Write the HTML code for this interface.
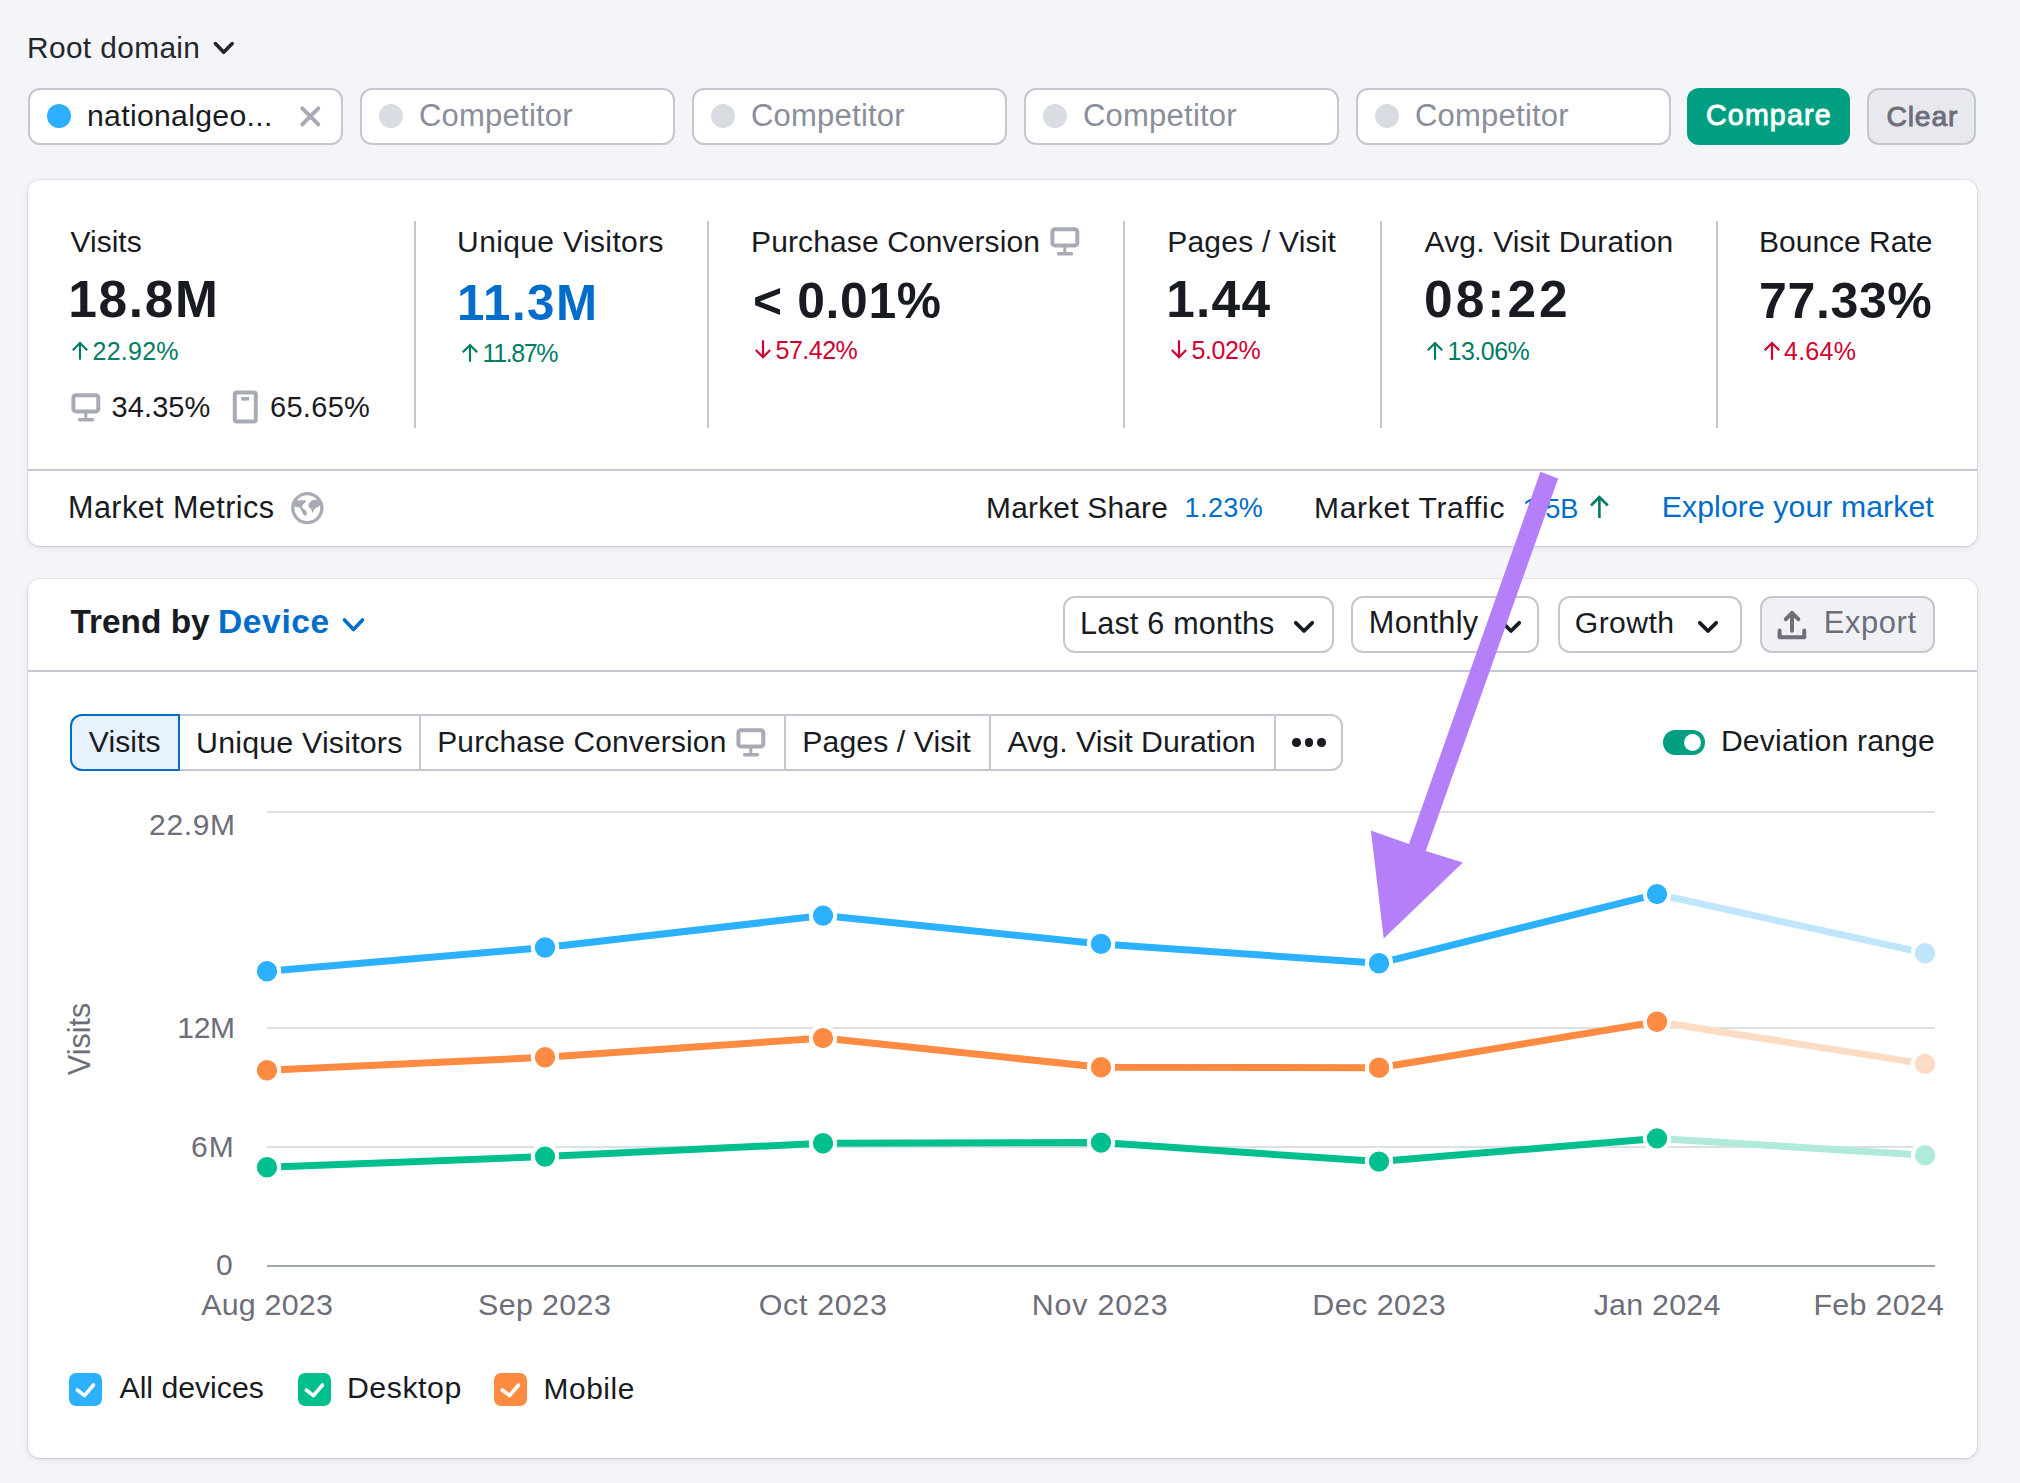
<!DOCTYPE html>
<html><head><meta charset="utf-8"><style>
html,body{margin:0;padding:0;}
body{width:2020px;height:1483px;overflow:hidden;background:#f4f5f9;position:relative;font-family:"Liberation Sans",sans-serif;}
.a{position:absolute;}
.t{position:absolute;line-height:1;white-space:nowrap;}
.box{box-sizing:border-box;border:2px solid #c4c7cf;border-radius:12px;background:#fff;}
.card{background:#fff;border-radius:12px;box-shadow:0 0 0 1px rgba(25,27,35,0.05),0 1px 2px rgba(25,27,35,0.10),0 2px 8px rgba(25,27,35,0.07);}
</style></head><body>
<div class="t" style="left:27.00px;top:33.17px;font-size:29.8px;color:#24262e;font-weight:400;letter-spacing:0.400px;">Root domain</div>
<svg class="a" style="left:205px;top:30px" width="40" height="36"><path d="M10.4 13.6 L18.7 22.3 L27.2 13.6" fill="none" stroke="#24262e" stroke-width="3.6" stroke-linecap="round" stroke-linejoin="round"/></svg>
<div class="a box" style="left:28px;top:88px;width:315px;height:57px"></div>
<div class="a" style="left:47px;top:104px;width:24px;height:24px;border-radius:50%;background:#2dafff"></div>
<div class="t" style="left:87.00px;top:100.63px;font-size:30.2px;color:#191b23;font-weight:400;letter-spacing:0.308px;">nationalgeo...</div>
<svg class="a" style="left:290px;top:96px" width="40" height="40"><path d="M12.3 12.3 L28.3 28.3 M28.3 12.3 L12.3 28.3" stroke="#a8abb6" stroke-width="4" stroke-linecap="round"/></svg>
<div class="a box" style="left:360px;top:88px;width:315px;height:57px"></div>
<div class="a" style="left:378.6px;top:104px;width:24px;height:24px;border-radius:50%;background:#d9dce3"></div>
<div class="t" style="left:419.00px;top:99.75px;font-size:31px;color:#8a8e9b;font-weight:400;letter-spacing:0.222px;">Competitor</div>
<div class="a box" style="left:692px;top:88px;width:315px;height:57px"></div>
<div class="a" style="left:710.6px;top:104px;width:24px;height:24px;border-radius:50%;background:#d9dce3"></div>
<div class="t" style="left:751.00px;top:99.75px;font-size:31px;color:#8a8e9b;font-weight:400;letter-spacing:0.222px;">Competitor</div>
<div class="a box" style="left:1024px;top:88px;width:315px;height:57px"></div>
<div class="a" style="left:1042.6px;top:104px;width:24px;height:24px;border-radius:50%;background:#d9dce3"></div>
<div class="t" style="left:1083.00px;top:99.75px;font-size:31px;color:#8a8e9b;font-weight:400;letter-spacing:0.222px;">Competitor</div>
<div class="a box" style="left:1356px;top:88px;width:315px;height:57px"></div>
<div class="a" style="left:1374.6px;top:104px;width:24px;height:24px;border-radius:50%;background:#d9dce3"></div>
<div class="t" style="left:1415.00px;top:99.75px;font-size:31px;color:#8a8e9b;font-weight:400;letter-spacing:0.222px;">Competitor</div>
<div class="a" style="left:1687px;top:88px;width:163px;height:57px;border-radius:12px;background:#009f81"></div>
<div class="t" style="left:1706.00px;top:101.28px;font-size:28.6px;color:#ffffff;font-weight:400;-webkit-text-stroke:0.9px #ffffff;letter-spacing:1.167px;">Compare</div>
<div class="a" style="left:1867px;top:88px;width:109px;height:57px;border-radius:12px;background:#e8e9ee;box-sizing:border-box;border:2px solid #c4c7cf"></div>
<div class="t" style="left:1886.50px;top:101.54px;font-size:28.3px;color:#6c6e79;font-weight:400;-webkit-text-stroke:0.9px #6c6e79;letter-spacing:0.814px;">Clear</div>
<div class="a card" style="left:28px;top:180px;width:1949px;height:366px"></div>
<div class="a" style="left:28px;top:469px;width:1949px;height:2px;background:#c4c7cf"></div>
<div class="a" style="left:413.5px;top:221px;width:2px;height:207px;background:#c4c7cf"></div>
<div class="a" style="left:706.5px;top:221px;width:2px;height:207px;background:#c4c7cf"></div>
<div class="a" style="left:1123px;top:221px;width:2px;height:207px;background:#c4c7cf"></div>
<div class="a" style="left:1380px;top:221px;width:2px;height:207px;background:#c4c7cf"></div>
<div class="a" style="left:1716px;top:221px;width:2px;height:207px;background:#c4c7cf"></div>
<div class="t" style="left:70.50px;top:226.60px;font-size:30px;color:#191b23;font-weight:400;">Visits</div>
<div class="t" style="left:68.25px;top:274.39px;font-size:51.5px;color:#191b23;font-weight:700;letter-spacing:1.625px;">18.8M</div>
<svg class="a" style="left:72.20px;top:341.00px" width="17" height="20"><path d="M8 18.8 L8 1.5 M0.8 9.3 L8 2 L15.2 9.3" fill="none" stroke="#007c65" stroke-width="2.2" stroke-linecap="butt" stroke-linejoin="miter"/></svg>
<div class="t" style="left:92.50px;top:338.83px;font-size:25px;color:#007c65;font-weight:400;letter-spacing:0.250px;">22.92%</div>
<div class="t" style="left:457.10px;top:226.60px;font-size:30px;color:#191b23;font-weight:400;letter-spacing:0.371px;">Unique Visitors</div>
<div class="t" style="left:457.00px;top:277.96px;font-size:49.3px;color:#006dca;font-weight:700;letter-spacing:1.425px;">11.3M</div>
<svg class="a" style="left:462.20px;top:343.00px" width="17" height="20"><path d="M8 18.8 L8 1.5 M0.8 9.3 L8 2 L15.2 9.3" fill="none" stroke="#007c65" stroke-width="2.2" stroke-linecap="butt" stroke-linejoin="miter"/></svg>
<div class="t" style="left:482.50px;top:340.83px;font-size:25px;color:#007c65;font-weight:400;letter-spacing:-1.400px;">11.87%</div>
<div class="t" style="left:751.00px;top:226.60px;font-size:30px;color:#191b23;font-weight:400;letter-spacing:0.122px;">Purchase Conversion</div>
<div class="t" style="left:753.00px;top:276.53px;font-size:49.8px;color:#191b23;font-weight:700;letter-spacing:0.667px;">&lt; 0.01%</div>
<svg class="a" style="left:755.20px;top:339.80px" width="17" height="20"><path d="M8 0.3 L8 17.6 M0.8 10 L8 17.3 L15.2 10" fill="none" stroke="#d1002f" stroke-width="2.2" stroke-linecap="butt" stroke-linejoin="miter"/></svg>
<div class="t" style="left:775.50px;top:337.63px;font-size:25px;color:#d1002f;font-weight:400;letter-spacing:-0.500px;">57.42%</div>
<div class="t" style="left:1167.25px;top:226.60px;font-size:30px;color:#191b23;font-weight:400;letter-spacing:0.209px;">Pages / Visit</div>
<div class="t" style="left:1166.25px;top:273.98px;font-size:51.4px;color:#191b23;font-weight:700;letter-spacing:1.250px;">1.44</div>
<svg class="a" style="left:1171.20px;top:340.00px" width="17" height="20"><path d="M8 0.3 L8 17.6 M0.8 10 L8 17.3 L15.2 10" fill="none" stroke="#d1002f" stroke-width="2.2" stroke-linecap="butt" stroke-linejoin="miter"/></svg>
<div class="t" style="left:1191.50px;top:337.83px;font-size:25px;color:#d1002f;font-weight:400;letter-spacing:-0.400px;">5.02%</div>
<div class="t" style="left:1424.50px;top:226.60px;font-size:30px;color:#191b23;font-weight:400;letter-spacing:0.167px;">Avg. Visit Duration</div>
<div class="t" style="left:1424.00px;top:274.39px;font-size:51.5px;color:#191b23;font-weight:700;letter-spacing:3.000px;">08:22</div>
<svg class="a" style="left:1427.20px;top:341.00px" width="17" height="20"><path d="M8 18.8 L8 1.5 M0.8 9.3 L8 2 L15.2 9.3" fill="none" stroke="#007c65" stroke-width="2.2" stroke-linecap="butt" stroke-linejoin="miter"/></svg>
<div class="t" style="left:1447.50px;top:338.83px;font-size:25px;color:#007c65;font-weight:400;letter-spacing:-0.500px;">13.06%</div>
<div class="t" style="left:1759.00px;top:226.60px;font-size:30px;color:#191b23;font-weight:400;">Bounce Rate</div>
<div class="t" style="left:1759.00px;top:275.58px;font-size:50.1px;color:#191b23;font-weight:700;letter-spacing:0.600px;">77.33%</div>
<svg class="a" style="left:1763.70px;top:341.00px" width="17" height="20"><path d="M8 18.8 L8 1.5 M0.8 9.3 L8 2 L15.2 9.3" fill="none" stroke="#d1002f" stroke-width="2.2" stroke-linecap="butt" stroke-linejoin="miter"/></svg>
<div class="t" style="left:1784.00px;top:338.83px;font-size:25px;color:#d1002f;font-weight:400;letter-spacing:0.250px;">4.64%</div>
<svg class="a" style="left:1050px;top:227px" width="30" height="30"><rect x="2.4" y="2.2" width="24.9" height="16.2" rx="2.5" fill="none" stroke="#a8abb6" stroke-width="4"/><rect x="13.3" y="20" width="3" height="6" fill="#a8abb6"/><rect x="6.9" y="25" width="16.3" height="3.6" rx="1.8" fill="#a8abb6"/></svg>
<svg class="a" style="left:70.5px;top:392.5px" width="30" height="30"><rect x="2.4" y="2.2" width="24.9" height="16.2" rx="2.5" fill="none" stroke="#a8abb6" stroke-width="4"/><rect x="13.3" y="20" width="3" height="6" fill="#a8abb6"/><rect x="6.9" y="25" width="16.3" height="3.6" rx="1.8" fill="#a8abb6"/></svg>
<svg class="a" style="left:232px;top:390px" width="27" height="34"><rect x="2.8" y="2.5" width="21" height="29" rx="2" fill="none" stroke="#a8abb6" stroke-width="4"/><rect x="9.2" y="7" width="8" height="3.6" fill="#a8abb6"/></svg>
<div class="t" style="left:111.60px;top:393.15px;font-size:29px;color:#191b23;font-weight:400;letter-spacing:0.080px;">34.35%</div>
<div class="t" style="left:270.00px;top:393.15px;font-size:29px;color:#191b23;font-weight:400;letter-spacing:0.300px;">65.65%</div>
<div class="t" style="left:68.00px;top:492.34px;font-size:30.6px;color:#191b23;font-weight:400;letter-spacing:0.423px;">Market Metrics</div>
<svg class="a" style="left:284px;top:486px" width="50" height="44"><circle cx="23.3" cy="22.1" r="14.55" fill="none" stroke="#a8abb6" stroke-width="3.3"/><path d="M11 20.8 C14 20.5 16 21.5 17 23.5 C18 26 19.5 30 21.1 29.7 C23 29.4 23.2 26.5 22.6 25.5 C22 24 18 23 18.1 20.5 C18.2 18.5 22.5 16.5 22 14.8 C21 14 16 14.5 13.6 14.5 L10 14 L9 21 Z M32 13.6 C29 14 27 14.5 26.7 15.4 C25 17 24 19 24.6 20.2 C25.5 22 27 22.5 27.3 23.4 C27.8 25 28 26.7 28.5 26.7 C29.5 26.5 30 23.5 31.2 22.6 C32.5 21.5 34 20.5 35.6 20.2 L37 15 Z" fill="#a8abb6"/></svg>
<div class="t" style="left:986.00px;top:492.68px;font-size:29.9px;color:#191b23;font-weight:400;letter-spacing:0.227px;">Market Share</div>
<div class="t" style="left:1184.50px;top:495.14px;font-size:27px;color:#006dca;font-weight:400;letter-spacing:0.438px;">1.23%</div>
<div class="t" style="left:1314.00px;top:492.60px;font-size:30px;color:#191b23;font-weight:400;letter-spacing:0.712px;">Market Traffic</div>
<div class="t" style="left:1522.50px;top:494.97px;font-size:27.2px;color:#006dca;font-weight:400;">1.5B</div>
<svg class="a" style="left:1589px;top:495px" width="21" height="24"><path d="M10.4 23 L10.4 2.5 M2 10.5 L10.4 2.2 L18.8 10.5" fill="none" stroke="#007c65" stroke-width="2.6"/></svg>
<div class="t" style="left:1661.75px;top:492.47px;font-size:30.15px;color:#006dca;font-weight:400;letter-spacing:0.125px;">Explore your market</div>
<div class="a card" style="left:28px;top:579px;width:1949px;height:879px"></div>
<div class="t" style="left:70.50px;top:605.47px;font-size:33.4px;color:#191b23;font-weight:700;">Trend by</div>
<div class="t" style="left:218.00px;top:605.30px;font-size:33.6px;color:#006dca;font-weight:700;letter-spacing:0.600px;">Device</div>
<svg class="a" style="left:338px;top:610px" width="32" height="30"><path d="M6.5 10 L15.5 19.5 L24.5 10" fill="none" stroke="#006dca" stroke-width="3.6" stroke-linecap="round" stroke-linejoin="round"/></svg>
<div class="a" style="left:28px;top:670px;width:1949px;height:2px;background:#c4c7cf"></div>
<div class="a box" style="left:1062.5px;top:596px;width:271px;height:57px"></div>
<div class="t" style="left:1080.00px;top:607.93px;font-size:30.5px;color:#191b23;font-weight:400;letter-spacing:0.229px;">Last 6 months</div>
<svg class="a" style="left:1290px;top:616.5px" width="28" height="20"><path d="M5.8 5.8 L14 14 L22.2 5.8" fill="none" stroke="#191b23" stroke-width="3.8" stroke-linecap="round" stroke-linejoin="round"/></svg>
<div class="a box" style="left:1351.25px;top:596px;width:188px;height:57px"></div>
<div class="t" style="left:1368.75px;top:607.76px;font-size:30.7px;color:#191b23;font-weight:400;letter-spacing:0.330px;">Monthly</div>
<svg class="a" style="left:1497px;top:616.5px" width="28" height="20"><path d="M5.8 5.8 L14 14 L22.2 5.8" fill="none" stroke="#191b23" stroke-width="3.8" stroke-linecap="round" stroke-linejoin="round"/></svg>
<div class="a box" style="left:1557.5px;top:596px;width:184.5px;height:57px"></div>
<div class="t" style="left:1574.75px;top:608.18px;font-size:30.2px;color:#191b23;font-weight:400;letter-spacing:0.400px;">Growth</div>
<svg class="a" style="left:1694px;top:616.5px" width="28" height="20"><path d="M5.8 5.8 L14 14 L22.2 5.8" fill="none" stroke="#191b23" stroke-width="3.8" stroke-linecap="round" stroke-linejoin="round"/></svg>
<div class="a box" style="left:1759.5px;top:596px;width:175px;height:57px;background:#f0f1f5"></div>
<svg class="a" style="left:1768px;top:600px" width="50" height="48"><path d="M24 30.7 L24 13 M17.8 19.2 L24 12.8 L30.3 19.2" fill="none" stroke="#6c6e79" stroke-width="4" stroke-linecap="round" stroke-linejoin="round"/><path d="M11.6 30.5 L11.6 37.2 L36.3 37.2 L36.3 30.5" fill="none" stroke="#6c6e79" stroke-width="4" stroke-linecap="round" stroke-linejoin="round"/></svg>
<div class="t" style="left:1823.75px;top:607.59px;font-size:30.9px;color:#6c6e79;font-weight:400;letter-spacing:0.600px;">Export</div>
<div class="a" style="left:69.5px;top:714px;width:1273px;height:57px;box-sizing:border-box;border:2px solid #c4c7cf;border-radius:12px;background:#fff"></div>
<div class="a" style="left:69.5px;top:714px;width:110px;height:57px;box-sizing:border-box;border:2px solid #006dca;border-radius:12px 0 0 12px;background:#e7f2fe"></div>
<div class="a" style="left:419px;top:715px;width:2px;height:55px;background:#c4c7cf"></div>
<div class="a" style="left:784px;top:715px;width:2px;height:55px;background:#c4c7cf"></div>
<div class="a" style="left:989px;top:715px;width:2px;height:55px;background:#c4c7cf"></div>
<div class="a" style="left:1274px;top:715px;width:2px;height:55px;background:#c4c7cf"></div>
<div class="t" style="left:88.75px;top:727.01px;font-size:30.1px;color:#191b23;font-weight:400;letter-spacing:0.100px;">Visits</div>
<div class="t" style="left:196.00px;top:726.76px;font-size:30.4px;color:#191b23;font-weight:400;letter-spacing:0.179px;">Unique Visitors</div>
<div class="t" style="left:437.25px;top:727.18px;font-size:29.9px;color:#191b23;font-weight:400;letter-spacing:0.181px;">Purchase Conversion</div>
<svg class="a" style="left:736px;top:728px" width="30" height="30"><rect x="2.4" y="2.2" width="24.9" height="16.2" rx="2.5" fill="none" stroke="#a8abb6" stroke-width="4"/><rect x="13.3" y="20" width="3" height="6" fill="#a8abb6"/><rect x="6.9" y="25" width="16.3" height="3.6" rx="1.8" fill="#a8abb6"/></svg>
<div class="t" style="left:802.25px;top:726.93px;font-size:30.2px;color:#191b23;font-weight:400;letter-spacing:0.105px;">Pages / Visit</div>
<div class="t" style="left:1007.50px;top:726.84px;font-size:30.3px;color:#191b23;font-weight:400;">Avg. Visit Duration</div>
<div class="a" style="left:1292.0px;top:738px;width:8.5px;height:8.5px;border-radius:50%;background:#191b23"></div>
<div class="a" style="left:1304.5px;top:738px;width:8.5px;height:8.5px;border-radius:50%;background:#191b23"></div>
<div class="a" style="left:1317.0px;top:738px;width:8.5px;height:8.5px;border-radius:50%;background:#191b23"></div>
<div class="a" style="left:1663px;top:730px;width:41.5px;height:24.5px;border-radius:12.25px;background:#009f81"></div>
<div class="a" style="left:1683.5px;top:733.5px;width:17px;height:17px;border-radius:50%;background:#fff"></div>
<div class="t" style="left:1720.90px;top:725.83px;font-size:30.2px;color:#191b23;font-weight:400;letter-spacing:0.179px;">Deviation range</div>
<div class="a" style="left:267px;top:811px;width:1668px;height:2px;background:#dbe0e3"></div>
<div class="a" style="left:267px;top:1027px;width:1668px;height:2px;background:#dbe0e3"></div>
<div class="a" style="left:267px;top:1146px;width:1668px;height:2px;background:#dbe0e3"></div>
<div class="a" style="left:267px;top:1265px;width:1668px;height:2px;background:#a1a9ae"></div>
<div class="t" style="right:1784.22px;top:810.10px;font-size:30px;color:#6c6e79;font-weight:400;letter-spacing:0.675px;">22.9M</div>
<div class="t" style="right:1785.10px;top:1013.40px;font-size:30px;color:#6c6e79;font-weight:400;letter-spacing:-0.200px;">12M</div>
<div class="t" style="right:1785.30px;top:1132.00px;font-size:30px;color:#6c6e79;font-weight:400;letter-spacing:1.000px;">6M</div>
<div class="t" style="right:1787.30px;top:1250.20px;font-size:30px;color:#6c6e79;font-weight:400;">0</div>
<div class="a" style="left:79.4px;top:1039.4px;width:0;height:0"><div style="position:absolute;left:0;top:0;transform:translate(-50%,-50%) rotate(-90deg);font-size:30.5px;line-height:1;color:#6c6e79;white-space:nowrap">Visits</div></div>
<div class="t" style="left:267.11px;transform:translateX(-50%);top:1289.46px;font-size:30.4px;color:#6c6e79;font-weight:400;letter-spacing:0.214px;">Aug 2023</div>
<div class="t" style="left:544.59px;transform:translateX(-50%);top:1289.46px;font-size:30.4px;color:#6c6e79;font-weight:400;letter-spacing:0.386px;">Sep 2023</div>
<div class="t" style="left:823.14px;transform:translateX(-50%);top:1289.46px;font-size:30.4px;color:#6c6e79;font-weight:400;letter-spacing:0.686px;">Oct 2023</div>
<div class="t" style="left:1100.10px;transform:translateX(-50%);top:1289.46px;font-size:30.4px;color:#6c6e79;font-weight:400;letter-spacing:0.800px;">Nov 2023</div>
<div class="t" style="left:1379.24px;transform:translateX(-50%);top:1289.46px;font-size:30.4px;color:#6c6e79;font-weight:400;letter-spacing:0.486px;">Dec 2023</div>
<div class="t" style="left:1657.11px;transform:translateX(-50%);top:1289.46px;font-size:30.4px;color:#6c6e79;font-weight:400;letter-spacing:0.229px;">Jan 2024</div>
<div class="t" style="right:75.69px;top:1289.46px;font-size:30.4px;color:#6c6e79;font-weight:400;letter-spacing:0.314px;">Feb 2024</div>
<svg class="a" style="left:0;top:0" width="2020" height="1483"><polyline points="267,971.3 545,947.5 823,915.6 1101,943.9 1379,963.3 1657,894.1" fill="none" stroke="#2bb1ff" stroke-width="7" stroke-linejoin="round"/><line x1="1657" y1="894.1" x2="1925" y2="953.2" stroke="#c0e6fc" stroke-width="7"/><circle cx="267" cy="971.3" r="12.2" fill="#2bb1ff" stroke="#fff" stroke-width="4"/><circle cx="545" cy="947.5" r="12.2" fill="#2bb1ff" stroke="#fff" stroke-width="4"/><circle cx="823" cy="915.6" r="12.2" fill="#2bb1ff" stroke="#fff" stroke-width="4"/><circle cx="1101" cy="943.9" r="12.2" fill="#2bb1ff" stroke="#fff" stroke-width="4"/><circle cx="1379" cy="963.3" r="12.2" fill="#2bb1ff" stroke="#fff" stroke-width="4"/><circle cx="1657" cy="894.1" r="12.2" fill="#2bb1ff" stroke="#fff" stroke-width="4"/><circle cx="1925" cy="953.2" r="12.2" fill="#c0e6fc" stroke="#fff" stroke-width="4"/><polyline points="267,1070.2 545,1057.3 823,1038.1 1101,1067.3 1379,1067.7 1657,1021.8" fill="none" stroke="#ff8b42" stroke-width="7" stroke-linejoin="round"/><line x1="1657" y1="1021.8" x2="1925" y2="1063.9" stroke="#fddcc6" stroke-width="7"/><circle cx="267" cy="1070.2" r="12.2" fill="#ff8b42" stroke="#fff" stroke-width="4"/><circle cx="545" cy="1057.3" r="12.2" fill="#ff8b42" stroke="#fff" stroke-width="4"/><circle cx="823" cy="1038.1" r="12.2" fill="#ff8b42" stroke="#fff" stroke-width="4"/><circle cx="1101" cy="1067.3" r="12.2" fill="#ff8b42" stroke="#fff" stroke-width="4"/><circle cx="1379" cy="1067.7" r="12.2" fill="#ff8b42" stroke="#fff" stroke-width="4"/><circle cx="1657" cy="1021.8" r="12.2" fill="#ff8b42" stroke="#fff" stroke-width="4"/><circle cx="1925" cy="1063.9" r="12.2" fill="#fddcc6" stroke="#fff" stroke-width="4"/><polyline points="267,1167.2 545,1156.6 823,1143.2 1101,1142.6 1379,1161.6 1657,1138.4" fill="none" stroke="#00bf8f" stroke-width="7" stroke-linejoin="round"/><line x1="1657" y1="1138.4" x2="1925" y2="1155.2" stroke="#b0eadb" stroke-width="7"/><circle cx="267" cy="1167.2" r="12.2" fill="#00bf8f" stroke="#fff" stroke-width="4"/><circle cx="545" cy="1156.6" r="12.2" fill="#00bf8f" stroke="#fff" stroke-width="4"/><circle cx="823" cy="1143.2" r="12.2" fill="#00bf8f" stroke="#fff" stroke-width="4"/><circle cx="1101" cy="1142.6" r="12.2" fill="#00bf8f" stroke="#fff" stroke-width="4"/><circle cx="1379" cy="1161.6" r="12.2" fill="#00bf8f" stroke="#fff" stroke-width="4"/><circle cx="1657" cy="1138.4" r="12.2" fill="#00bf8f" stroke="#fff" stroke-width="4"/><circle cx="1925" cy="1155.2" r="12.2" fill="#b0eadb" stroke="#fff" stroke-width="4"/></svg>
<svg class="a" style="left:69px;top:1373px" width="33" height="33"><rect x="0" y="0" width="33" height="33" rx="7" fill="#2bb1ff"/><path d="M8.3 17 L15.5 22.6 L24.5 12" fill="none" stroke="#fff" stroke-width="3.6" stroke-linecap="round" stroke-linejoin="round"/></svg>
<div class="t" style="left:119.50px;top:1373.43px;font-size:30.2px;color:#191b23;font-weight:400;">All devices</div>
<svg class="a" style="left:298px;top:1373px" width="33" height="33"><rect x="0" y="0" width="33" height="33" rx="7" fill="#00bf8f"/><path d="M8.3 17 L15.5 22.6 L24.5 12" fill="none" stroke="#fff" stroke-width="3.6" stroke-linecap="round" stroke-linejoin="round"/></svg>
<div class="t" style="left:346.90px;top:1373.34px;font-size:30.3px;color:#191b23;font-weight:400;letter-spacing:0.550px;">Desktop</div>
<svg class="a" style="left:494px;top:1373px" width="33" height="33"><rect x="0" y="0" width="33" height="33" rx="7" fill="#ff8b42"/><path d="M8.3 17 L15.5 22.6 L24.5 12" fill="none" stroke="#fff" stroke-width="3.6" stroke-linecap="round" stroke-linejoin="round"/></svg>
<div class="t" style="left:543.60px;top:1373.68px;font-size:29.9px;color:#191b23;font-weight:400;letter-spacing:0.540px;">Mobile</div>
<svg class="a" style="left:0;top:0" width="2020" height="1483"><polygon points="1540.4,471.8 1558.2,478.5 1425.8,851 1462.9,862.6 1383.7,938.4 1370.9,830.6 1409,844" fill="#b57ffa"/></svg>
</body></html>
